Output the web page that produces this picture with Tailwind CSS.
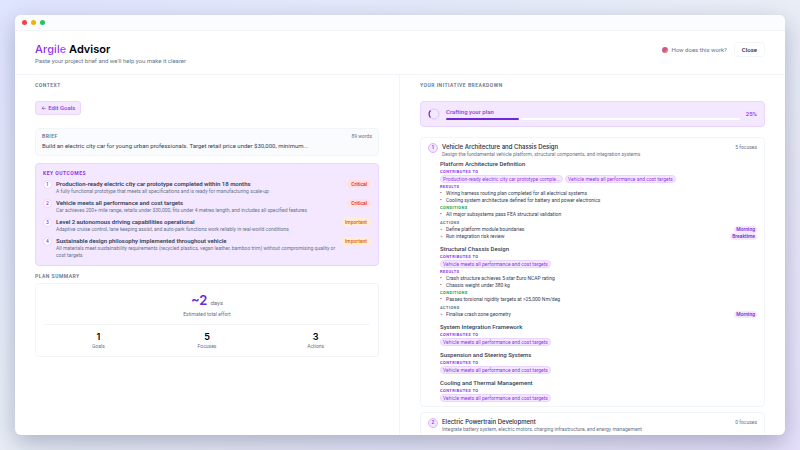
<!DOCTYPE html>
<html lang="en">
<head>
<meta charset="utf-8">
<meta name="viewport" content="width=device-width, initial-scale=1">
<title>Argile Advisor</title>
<script src="https://cdn.jsdelivr.net/npm/@tailwindcss/browser@4"></script>
</head>
<body class="font-[Roboto,Inter,sans-serif] text-[#334155] bg-linear-to-br from-[#e0e5ff] via-[#e9eef6] to-[#e6e0fb]">
<div class="h-screen p-[15px]">
<div class="flex h-full flex-col overflow-hidden rounded-md bg-white shadow-[0_8px_24px_rgba(30,41,80,0.3)]">
  <div class="flex h-4 shrink-0 items-center gap-[4px] border-b border-slate-100 bg-[#fafcfd] px-[7px]">
    <span class="size-[5px] rounded-full bg-[#ef4444]"></span>
    <span class="size-[5px] rounded-full bg-[#eab308]"></span>
    <span class="size-[5px] rounded-full bg-[#22c55e]"></span>
  </div>
  <header class="flex shrink-0 items-center justify-between border-b border-slate-100 px-5 pt-[11px] pb-[9px]">
    <div>
      <h1 class="font-[Inter,sans-serif] text-[11px] leading-[14px] font-semibold text-black"><span class="bg-linear-to-r from-[#9333ea] to-[#a855f7] bg-clip-text text-transparent">Argile</span> Advisor</h1>
      <p class="text-[6px] leading-[9px] text-[#64748b]">Paste your project brief and we'll help you make it clearer</p>
    </div>
    <div class="flex items-center gap-[7px] pb-[8px]">
      <a href="#" class="flex items-center gap-[3px] text-[6px] leading-[8px] text-[#64748b]"><span class="size-[6px] rounded-full bg-linear-to-br from-[#a855c7] via-[#d9547a] to-[#f59e5b]"></span>How does this work?</a>
      <button type="button" class="rounded-[4px] border border-slate-100 px-[7px] py-[2px] text-[6px] leading-[9px] font-medium text-[#1e293b]">Close</button>
    </div>
  </header>
  <main class="grid min-h-0 flex-1 grid-cols-2">
    <section class="border-r border-slate-100 px-5 pt-[7px]">
      <h2 class="text-[5px] leading-[7px] font-semibold tracking-widest text-[#64748b] uppercase">Context</h2>
      <button type="button" class="mt-[12px] block rounded-[3px] border border-[#e9d5ff] bg-[#f3e8ff] px-[5px] py-[2px] text-[6px] leading-[8px] font-medium text-[#8b3fd4]">← Edit Goals</button>
      <div class="mt-[13px] rounded-[4px] border border-slate-100 bg-slate-50/70 px-[6px] pt-[4px] pb-[5px]">
        <div class="flex items-center justify-between leading-[7px]">
          <h3 class="text-[5px] font-semibold tracking-widest text-[#64748b] uppercase">Brief</h3>
          <span class="text-[5px] text-[#64748b]">89 words</span>
        </div>
        <p class="mt-[2px] text-[6px] leading-[8px]">Build an electric city car for young urban professionals. Target retail price under $30,000, minimum...</p>
      </div>
      <div class="mt-[7px] rounded-[4px] border border-[#e9d5ff] bg-[#f3e8ff] px-[7px] pt-[6px] pb-[6px]">
        <h3 class="text-[5px] leading-[7px] font-bold tracking-widest text-[#9333ea] uppercase">Key outcomes</h3>
        <ol class="mt-[3px] space-y-[4px]">
          <li class="flex items-start gap-[4px]">
            <span class="flex size-[9px] shrink-0 items-center justify-center rounded-full border border-[#e9d5ff] bg-white text-[5px] font-medium text-[#9333ea]">1</span>
            <div class="flex-1"><p class="text-[6px] leading-[8px] font-semibold">Production-ready electric city car prototype completed within 18 months</p><p class="max-w-[280px] text-[5px] leading-[7px] text-[#64748b]">A fully functional prototype that meets all specifications and is ready for manufacturing scale-up</p></div>
            <span class="rounded-full bg-[#fee2e2] px-[4px] text-[5px] leading-[8px] font-medium text-[#dc2626]">Critical</span>
          </li>
          <li class="flex items-start gap-[4px]">
            <span class="flex size-[9px] shrink-0 items-center justify-center rounded-full border border-[#e9d5ff] bg-white text-[5px] font-medium text-[#9333ea]">2</span>
            <div class="flex-1"><p class="text-[6px] leading-[8px] font-semibold">Vehicle meets all performance and cost targets</p><p class="max-w-[280px] text-[5px] leading-[7px] text-[#64748b]">Car achieves 200+ mile range, retails under $30,000, fits under 4 metres length, and includes all specified features</p></div>
            <span class="rounded-full bg-[#fee2e2] px-[4px] text-[5px] leading-[8px] font-medium text-[#dc2626]">Critical</span>
          </li>
          <li class="flex items-start gap-[4px]">
            <span class="flex size-[9px] shrink-0 items-center justify-center rounded-full border border-[#e9d5ff] bg-white text-[5px] font-medium text-[#9333ea]">3</span>
            <div class="flex-1"><p class="text-[6px] leading-[8px] font-semibold">Level 2 autonomous driving capabilities operational</p><p class="max-w-[280px] text-[5px] leading-[7px] text-[#64748b]">Adaptive cruise control, lane keeping assist, and auto-park functions work reliably in real-world conditions</p></div>
            <span class="rounded-full bg-[#ffedd5] px-[4px] text-[5px] leading-[8px] font-medium text-[#d9621c]">Important</span>
          </li>
          <li class="flex items-start gap-[4px]">
            <span class="flex size-[9px] shrink-0 items-center justify-center rounded-full border border-[#e9d5ff] bg-white text-[5px] font-medium text-[#9333ea]">4</span>
            <div class="flex-1"><p class="text-[6px] leading-[8px] font-semibold">Sustainable design philosophy implemented throughout vehicle</p><p class="max-w-[280px] text-[5px] leading-[7px] text-[#64748b]">All materials meet sustainability requirements (recycled plastics, vegan leather, bamboo trim) without compromising quality or cost targets</p></div>
            <span class="rounded-full bg-[#ffedd5] px-[4px] text-[5px] leading-[8px] font-medium text-[#d9621c]">Important</span>
          </li>
        </ol>
      </div>
      <h2 class="mt-[7px] text-[5px] leading-[7px] font-semibold tracking-widest text-[#64748b] uppercase">Plan summary</h2>
      <div class="mt-[3px] rounded-[4px] border border-slate-100 px-[8px] pt-[8px] pb-[6px] text-center text-[#64748b]">
        <p class="flex items-baseline justify-center gap-[3px] text-[6px] leading-[16px]"><span class="font-[Inter,sans-serif] text-[13px] font-semibold text-[#6d28d9]">~2</span><span>days</span></p>
        <p class="text-[5px] leading-[7px]">Estimated total effort</p>
        <dl class="mt-[6px] grid grid-cols-3 border-t border-slate-100 pt-[6px] text-[5px] leading-[7px]">
          <div class="flex flex-col-reverse"><dt>Goals</dt><dd class="font-[Inter,sans-serif] text-[9px] leading-[12px] font-semibold text-black">1</dd></div>
          <div class="flex flex-col-reverse"><dt>Focuses</dt><dd class="font-[Inter,sans-serif] text-[9px] leading-[12px] font-semibold text-black">5</dd></div>
          <div class="flex flex-col-reverse"><dt>Actions</dt><dd class="font-[Inter,sans-serif] text-[9px] leading-[12px] font-semibold text-black">3</dd></div>
        </dl>
      </div>
    </section>
    <section class="overflow-hidden px-5 pt-[7px]">
      <h2 class="text-[5px] leading-[7px] font-semibold tracking-widest text-[#64748b] uppercase">Your initiative breakdown</h2>
      <div class="mt-[12px] flex items-center gap-[6px] rounded-[4px] border border-[#e9d5ff] bg-[#f3e8ff] px-[7px] py-[6px]">
        <svg class="size-[12px]" viewBox="0 0 12 12" fill="none"><circle cx="6" cy="6" r="5" stroke="#dcc0fb"/><path d="M2.5 9.5A5 5 0 0 1 2.5 2.5" stroke="#7e22ce" stroke-width="1.2"/></svg>
        <div class="flex-1">
          <p id="plan-label" class="text-[6px] leading-[8px] font-medium text-[#8b3fd4]">Crafting your plan</p>
          <div role="progressbar" aria-labelledby="plan-label" aria-valuenow="25" class="mt-[2px] h-[2px] rounded-full bg-white"><div class="h-full w-1/4 rounded-full bg-[#6d28d9]"></div></div>
        </div>
        <span class="text-[6px] leading-[8px] font-medium text-[#9333ea]">25%</span>
      </div>
      <article class="mt-[10px] rounded-[4px] border border-slate-100 px-[7px] pt-[5px] pb-[4px]">
        <div class="flex items-start gap-[4px]">
          <span class="flex size-[10px] shrink-0 items-center justify-center rounded-full border border-[#d8b4fe] bg-[#f3e8ff] text-[5px] font-semibold text-[#8b3fd4]">1</span>
          <div class="flex-1"><h3 class="font-[Inter,sans-serif] text-[6px] leading-[8px] font-medium text-[#1e293b]">Vehicle Architecture and Chassis Design</h3><p class="text-[5px] leading-[7px] text-[#64748b]">Design the fundamental vehicle platform, structural components, and integration systems</p></div>
          <span class="text-[5px] leading-[8px] text-[#64748b]">5 focuses</span>
        </div>
        <div class="mt-[2px] space-y-[5px] pl-[12px] text-[5px] leading-[7px]">
          <section>
            <h4 class="text-[6px] leading-[8px] font-medium">Platform Architecture Definition</h4>
            <h5 class="text-[4px] font-bold tracking-widest text-[#9333ea] uppercase">Contributes to</h5>
            <div class="flex gap-[2px] text-[#9333ea]"><span class="rounded-full border border-[#e9d5ff] bg-[#f3e8ff] px-[2px] leading-[6px]">Production-ready electric city car prototype comple...</span><span class="rounded-full border border-[#e9d5ff] bg-[#f3e8ff] px-[2px] leading-[6px]">Vehicle meets all performance and cost targets</span></div>
            <h5 class="text-[4px] font-bold tracking-widest text-[#9333ea] uppercase">Results</h5>
            <ul><li class="flex"><span class="w-[6px]">•</span>Wiring harness routing plan completed for all electrical systems</li><li class="flex"><span class="w-[6px]">•</span>Cooling system architecture defined for battery and power electronics</li></ul>
            <h5 class="text-[4px] font-bold tracking-widest text-[#16a34a] uppercase">Conditions</h5>
            <ul><li class="flex"><span class="w-[6px]">•</span>All major subsystems pass FEA structural validation</li></ul>
            <h5 class="mt-px text-[4px] font-bold tracking-widest text-[#64748b] uppercase">Actions</h5>
            <ul><li class="flex"><span class="w-[6px]">◦</span><span class="flex-1">Define platform module boundaries</span><span class="rounded-full bg-[#f3e8ff] px-[2px] leading-[6px] font-medium text-[#7e22ce]">Morning</span></li><li class="flex"><span class="w-[6px]">◦</span><span class="flex-1">Run integration risk review</span><span class="rounded-full bg-[#f3e8ff] px-[2px] leading-[6px] font-medium text-[#7e22ce]">Breaktime</span></li></ul>
          </section>
          <section>
            <h4 class="text-[6px] leading-[8px] font-medium">Structural Chassis Design</h4>
            <h5 class="text-[4px] font-bold tracking-widest text-[#9333ea] uppercase">Contributes to</h5>
            <div class="flex text-[#9333ea]"><span class="rounded-full border border-[#e9d5ff] bg-[#f3e8ff] px-[2px] leading-[6px]">Vehicle meets all performance and cost targets</span></div>
            <h5 class="text-[4px] font-bold tracking-widest text-[#9333ea] uppercase">Results</h5>
            <ul><li class="flex"><span class="w-[6px]">•</span>Crash structure achieves 5-star Euro NCAP rating</li><li class="flex"><span class="w-[6px]">•</span>Chassis weight under 380 kg</li></ul>
            <h5 class="text-[4px] font-bold tracking-widest text-[#16a34a] uppercase">Conditions</h5>
            <ul><li class="flex"><span class="w-[6px]">•</span>Passes torsional rigidity targets at &gt;25,000 Nm/deg</li></ul>
            <h5 class="mt-px text-[4px] font-bold tracking-widest text-[#64748b] uppercase">Actions</h5>
            <ul><li class="flex"><span class="w-[6px]">◦</span><span class="flex-1">Finalise crash zone geometry</span><span class="rounded-full bg-[#f3e8ff] px-[2px] leading-[6px] font-medium text-[#7e22ce]">Morning</span></li></ul>
          </section>
          <section>
            <h4 class="text-[6px] leading-[8px] font-medium">System Integration Framework</h4>
            <h5 class="text-[4px] font-bold tracking-widest text-[#9333ea] uppercase">Contributes to</h5>
            <div class="flex text-[#9333ea]"><span class="rounded-full border border-[#e9d5ff] bg-[#f3e8ff] px-[2px] leading-[6px]">Vehicle meets all performance and cost targets</span></div>
          </section>
          <section>
            <h4 class="text-[6px] leading-[8px] font-medium">Suspension and Steering Systems</h4>
            <h5 class="text-[4px] font-bold tracking-widest text-[#9333ea] uppercase">Contributes to</h5>
            <div class="flex text-[#9333ea]"><span class="rounded-full border border-[#e9d5ff] bg-[#f3e8ff] px-[2px] leading-[6px]">Vehicle meets all performance and cost targets</span></div>
          </section>
          <section>
            <h4 class="text-[6px] leading-[8px] font-medium">Cooling and Thermal Management</h4>
            <h5 class="text-[4px] font-bold tracking-widest text-[#9333ea] uppercase">Contributes to</h5>
            <div class="flex text-[#9333ea]"><span class="rounded-full border border-[#e9d5ff] bg-[#f3e8ff] px-[2px] leading-[6px]">Vehicle meets all performance and cost targets</span></div>
          </section>
        </div>
      </article>
      <article class="mt-[5px] rounded-[4px] border border-slate-100 px-[7px] pt-[5px] pb-[4px]">
        <div class="flex items-start gap-[4px]">
          <span class="flex size-[10px] shrink-0 items-center justify-center rounded-full border border-[#d8b4fe] bg-[#f3e8ff] text-[5px] font-semibold text-[#8b3fd4]">2</span>
          <div class="flex-1"><h3 class="font-[Inter,sans-serif] text-[6px] leading-[8px] font-medium text-[#1e293b]">Electric Powertrain Development</h3><p class="text-[5px] leading-[7px] text-[#64748b]">Integrate battery system, electric motors, charging infrastructure, and energy management</p></div>
          <span class="text-[5px] leading-[8px] text-[#64748b]">0 focuses</span>
        </div>
      </article>
    </section>
  </main>
</div>
</div>
</body>
</html>
